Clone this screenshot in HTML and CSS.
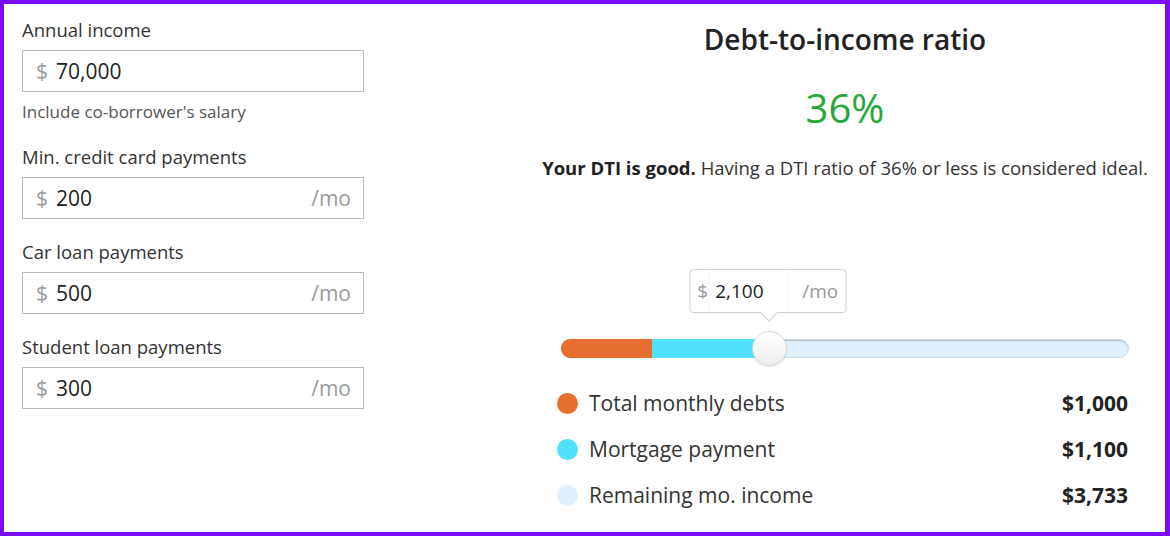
FILE: index.html
```html
<!DOCTYPE html>
<html lang="en">
<head>
    <meta charset="UTF-8">
    <meta name="viewport" content="width=device-width, initial-scale=1.0">
    <title>Debt-to-income calculator</title>
    <link rel="stylesheet" href="styles.css">
</head>
<body>
    <div class="calc">
        <div class="inputs">
            <div class="field">
                <label class="field-label">Annual income</label>
                <div class="field-box">
                    <span class="unit">$</span>
                    <span class="value">70,000</span>
                </div>
                <div class="field-hint">Include co-borrower's salary</div>
            </div>
            <div class="field">
                <label class="field-label">Min. credit card payments</label>
                <div class="field-box">
                    <span class="unit">$</span>
                    <span class="value">200</span>
                    <span class="unit">/mo</span>
                </div>
            </div>
            <div class="field">
                <label class="field-label">Car loan payments</label>
                <div class="field-box">
                    <span class="unit">$</span>
                    <span class="value">500</span>
                    <span class="unit">/mo</span>
                </div>
            </div>
            <div class="field">
                <label class="field-label">Student loan payments</label>
                <div class="field-box">
                    <span class="unit">$</span>
                    <span class="value">300</span>
                    <span class="unit">/mo</span>
                </div>
            </div>
        </div>

        <div class="results">
            <h1 class="results-title">Debt-to-income ratio</h1>
            <div class="ratio">36%</div>
            <p class="verdict"><b>Your DTI is good.</b> Having a DTI ratio of 36% or less is considered ideal.</p>

            <div class="slider">
                <!-- tooltip follows the thumb -->
                <div class="bubble" style="left: 36.4%;">
                    <span class="unit">$</span>
                    <span class="bubble-value">2,100</span>
                    <span class="unit">/mo</span>
                </div>
                <div class="track">
                    <div class="seg seg-debts" style="width: 16.1%;"></div>
                    <div class="seg seg-mortgage" style="width: 20.6%;"></div>
                    <div class="thumb"></div>
                </div>
            </div>

            <ul class="legend">
                <li><span class="dot dot-debts"></span><span class="legend-name">Total monthly debts</span><b>$1,000</b></li>
                <li><span class="dot dot-mortgage"></span><span class="legend-name">Mortgage payment</span><b>$1,100</b></li>
                <li><span class="dot dot-remain"></span><span class="legend-name">Remaining mo. income</span><b>$3,733</b></li>
            </ul>
        </div>
    </div>
</body>
</html>
```

FILE: styles.css
```css
* {
    box-sizing: border-box;
}

body {
    margin: 0;
    font-family: "Open Sans", "Liberation Sans", sans-serif;
    color: #333;
    background: #fff;
}

.calc {
    display: flex;
    width: 1170px;
    height: 536px;
    border: solid 4px #7b0cf3;
    border-right-width: 5px;
    padding: 14px 15px 0 18px;
}

/* left column */
.inputs {
    width: 342px;
    flex-shrink: 0;
}

.field {
    margin-bottom: 21px;
}

.field-label {
    display: block;
    font-size: 18.5px;
    line-height: 24px;
    margin-bottom: 8px;
    color: #333;
}

.field-box {
    display: flex;
    align-items: center;
    height: 42px;
    border: solid 1px #bcbcbc;
    padding: 0 12px 0 13px;
    font-size: 21px;
}

.unit {
    color: #9a9a9a;
}

.field-box .unit:first-child {
    margin-right: 8px;
}

.value {
    flex: 1;
    color: #222;
}

.field-hint {
    margin-top: 8px;
    margin-bottom: 5px;
    font-size: 17px;
    line-height: 24px;
    color: #555;
}

/* right column */
.results {
    flex: 1;
    margin-left: 176px;
    text-align: center;
}

.results-title {
    margin: 4px 0 0;
    font-size: 28px;
    line-height: 34px;
    font-weight: 600;
    color: #222;
}

.ratio {
    margin-top: 28px;
    font-size: 40px;
    line-height: 48px;
    color: #27a83b;
}

.verdict {
    margin: 24px 0 0;
    font-size: 18.5px;
    line-height: 24px;
    color: #333;
}

.verdict b {
    color: #222;
}

.slider {
    position: relative;
    margin: 89px 21px 0;
    padding-top: 70px;
}

.bubble {
    position: absolute;
    top: 0;
    transform: translateX(-50%);
    display: flex;
    align-items: center;
    width: 157px;
    height: 44px;
    padding: 0 7px 0 7px;
    border: solid 1px #d0d0d0;
    border-radius: 4px;
    background: #fff;
    font-size: 19px;
}

.bubble::after {
    content: "";
    position: absolute;
    left: 50%;
    bottom: -7px;
    width: 12px;
    height: 12px;
    margin-left: -5px;
    background: #fff;
    border-right: solid 1px #d0d0d0;
    border-bottom: solid 1px #d0d0d0;
    transform: rotate(45deg);
}

.bubble-value {
    flex: 1;
    text-align: left;
    margin: 0 14px 0 0;
    padding: 8px 0 8px 6px;
    color: #222;
    border-left: solid 1px #f8f8f8;
    border-right: solid 1px #f8f8f8;
}

.track {
    position: relative;
    display: flex;
    height: 19px;
    border-radius: 10px;
    background: #e1f0fd;
    box-shadow: inset 0 1px 1px rgba(0, 0, 0, 0.25);
    border: solid 1px #d3dbe2;
}

.seg-debts {
    background: #e86e30;
    border-radius: 9px 0 0 9px;
    margin: -1px 0 -1px -1px;
    height: 19px;
}

.seg-mortgage {
    background: #52e1fc;
    margin: -1px 0;
    height: 19px;
}

.thumb {
    width: 35px;
    height: 35px;
    margin: -9px 0 0 -17px;
    border-radius: 50%;
    border: solid 1px #d6d6d6;
    background: linear-gradient(#ffffff, #eeeeee);
    box-shadow: 0 1px 2px rgba(0, 0, 0, 0.1);
}

.legend {
    list-style: none;
    margin: 22px 22px 0 17px;
    padding: 0;
}

.legend li {
    display: flex;
    align-items: center;
    height: 46px;
    font-size: 21px;
    color: #333;
}

.legend b {
    color: #222;
}

.legend-name {
    flex: 1;
    text-align: left;
    margin-left: 11px;
}

.dot {
    width: 21px;
    height: 21px;
    border-radius: 50%;
}

.dot-debts {
    background: #e86e30;
}

.dot-mortgage {
    background: #52e1fc;
}

.dot-remain {
    background: #e1f0fd;
}
```
